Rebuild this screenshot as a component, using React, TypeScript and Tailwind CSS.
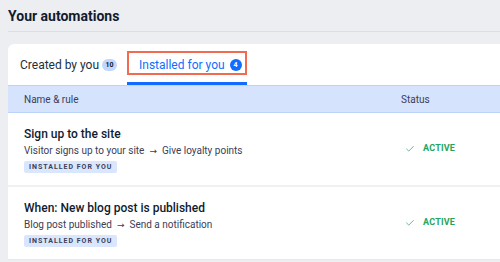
import React from 'react';
import { Check } from 'lucide-react';

type Automation = {
  title: string;
  trigger: string;
  action: string;
};

const AUTOMATIONS: Automation[] = [
  { title: 'Sign up to the site', trigger: 'Visitor signs up to your site', action: 'Give loyalty points' },
  { title: 'When: New blog post is published', trigger: 'Blog post published', action: 'Send a notification' },
];

const App: React.FC = () => {
  return (
    <main className="w-[500px] h-[262px] overflow-hidden bg-[#edeef2] text-[#101b2f] font-['Roboto',sans-serif]">
      <div className="pl-2 pt-[6px]">
        <h1 className="text-[14px] leading-5 font-bold">Your automations</h1>
        <div className="mt-[5px] border-t border-[#dcdee4]" />
      </div>

      <div className="ml-2 mt-[12px] bg-white rounded-tl-[6px]">
        {/* tabs */}
        <div className="h-[41px] flex items-stretch whitespace-nowrap">
          <div className="w-[119px] pl-3 flex items-center gap-[3px] text-[12px] text-[#20303c]">
            <span>Created by you</span>
            <span className="h-[12px] w-[15px] rounded-full bg-[#c3d6fb] text-[7px] font-bold leading-[12px] text-center text-[#101b2f]">10</span>
          </div>
          <div className="relative w-[120px] pl-3 flex items-center gap-[5px] text-[12px] text-[#116dff] border-b-[3px] border-[#116dff]">
            <span className="pt-[3px]">Installed for you</span>
            <span className="mt-[3px] w-[12px] h-[12px] rounded-full bg-[#116dff] text-[7px] font-bold leading-[12px] text-white text-center">4</span>
            <div className="absolute left-0 right-0 top-[7px] h-[24px] border-2 border-[#f26b50]" />
          </div>
        </div>

        {/* header */}
        <div className="h-[28px] flex items-center bg-[#d5e3fd] border-t border-b border-[#bcd2fa] text-[10px] text-[#3b4057]">
          <div className="flex-1 pl-4">Name &amp; rule</div>
          <div className="w-[99px]">Status</div>
        </div>

        {/* rows */}
        {AUTOMATIONS.map((a, i) => (
          <div key={a.title} className={`flex items-center ${i === 0 ? 'border-b-2 border-[#f0f1f4]' : 'border-b border-[#e6e8ed]'}`}>
            <div className="flex-1 pl-4 pt-[13px] pb-[12px]">
              <div className="text-[12px] leading-4 font-medium text-[#101b2f]">{a.title}</div>
              <div className="mt-[2px] text-[10px] leading-[14px] text-[#3b4057] flex items-center">
                <span>{a.trigger}</span>
                <span className="mx-[5px] text-[9px] leading-[14px] font-['DejaVu_Sans',sans-serif]">→</span>
                <span>{a.action}</span>
              </div>
              <div className="mt-[3px] w-fit h-[12px] px-[5px] rounded-[2px] bg-[#dae6fd] text-[7px] leading-[12px] font-bold tracking-[1px] text-[#3b4057]">
                INSTALLED FOR YOU
              </div>
            </div>
            <div className="w-[99px] flex items-center gap-[8px] pl-[4px] text-[#25a55a]">
              <Check className="w-[10px] h-[10px]" strokeWidth={1.75} />
              <span className="text-[9px] font-bold tracking-[0.2px]">ACTIVE</span>
            </div>
          </div>
        ))}
      </div>
    </main>
  );
};

export default App;
